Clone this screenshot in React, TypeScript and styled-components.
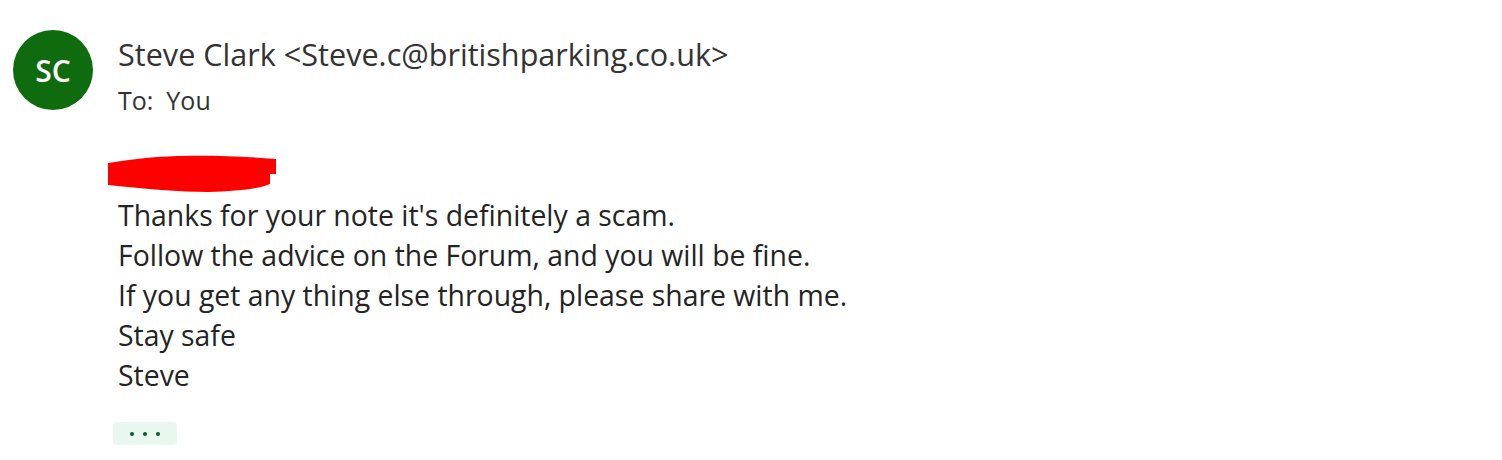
import styled, { createGlobalStyle } from "styled-components";

const Global = createGlobalStyle`
  html, body {
    margin: 0;
    padding: 0;
    background: #ffffff;
  }
  body {
    font-family: "Open Sans", "Noto Sans", sans-serif;
    color: #242424;
  }
`;

const Page = styled.div`
  width: 1502px;
  height: 460px;
  box-sizing: border-box;
  padding: 30px 0 0 13px;
  display: flex;
  gap: 25px;
`;

const Avatar = styled.div`
  width: 80px;
  height: 80px;
  border-radius: 50%;
  background: #0e6b0e;
  color: #ffffff;
  display: flex;
  align-items: center;
  justify-content: center;
  font-size: 30px;
  font-weight: 600;
  flex-shrink: 0;
`;

const Content = styled.div`
  display: flex;
  flex-direction: column;
`;

const Sender = styled.div`
  font-size: 30.6px;
  line-height: 44px;
  margin-top: 2px;
  color: #333333;
`;

const Recipient = styled.div`
  font-size: 25px;
  line-height: 32px;
  margin-top: 8px;
  color: #333333;
`;

const Redaction = styled.svg`
  display: block;
  margin: 38px 0 0 -10px;
`;

const Body = styled.div`
  font-size: 28.4px;
  line-height: 40px;
  margin-top: 1px;
  color: #242424;
`;

const Line = styled.div``;

const MoreButton = styled.div`
  margin-top: 27px;
  margin-left: -5px;
  width: 64px;
  height: 23px;
  border-radius: 4px;
  background: #e8f8ef;
  display: flex;
  align-items: center;
  justify-content: center;
  gap: 9px;
`;

const Dot = styled.span`
  width: 4px;
  height: 4px;
  border-radius: 50%;
  background: #0c5a2e;
`;

const lines = [
  "Thanks for your note it's definitely a scam.",
  "Follow the advice on the Forum, and you will be fine.",
  "If you get any thing else through, please share with me.",
  "Stay safe",
  "Steve",
];

export default function App() {
  return (
    <>
      <Global />
      <Page>
        <Avatar>SC</Avatar>
        <Content>
          <Sender>Steve Clark &lt;Steve.c@britishparking.co.uk&gt;</Sender>
          <Recipient>To:&nbsp; You</Recipient>
          <Redaction width="170" height="40" viewBox="0 0 170 40">
            <path
              d="M0 9 C20 6 40 3 70 2 C100 1 130 2 168 5 L168 20 L162 20 L162 30 C150 35 130 37 100 38 C70 38 40 35 0 31 Z"
              fill="#ff0000"
            />
          </Redaction>
          <Body>
            {lines.map((l) => (
              <Line key={l}>{l}</Line>
            ))}
          </Body>
          <MoreButton>
            <Dot />
            <Dot />
            <Dot />
          </MoreButton>
        </Content>
      </Page>
    </>
  );
}
